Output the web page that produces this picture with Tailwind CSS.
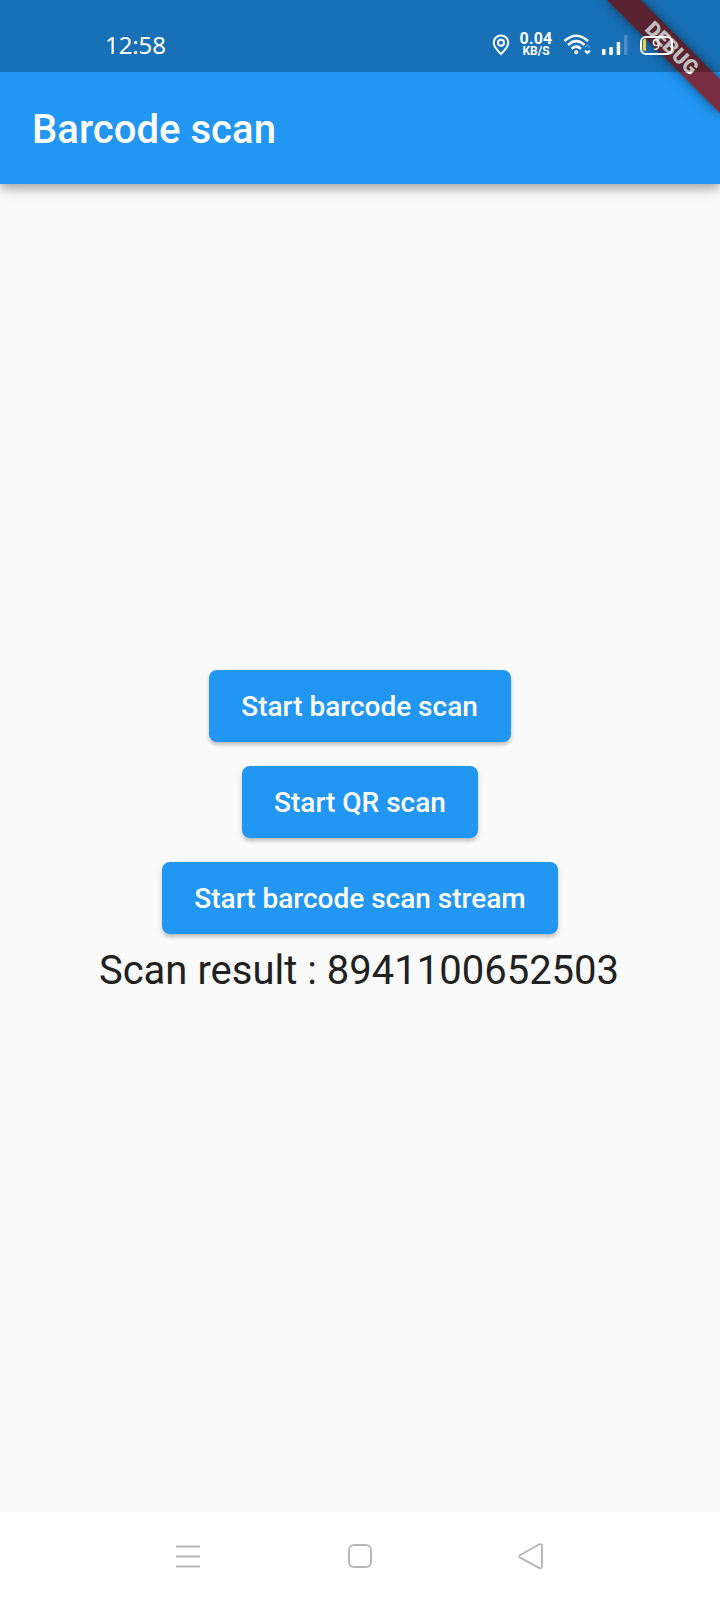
<!DOCTYPE html>
<html lang="en">
<head>
<meta charset="utf-8">
<title>Barcode scan</title>
<script src="https://cdn.jsdelivr.net/npm/@tailwindcss/browser@4"></script>
</head>
<body class="bg-[#fafafa] font-['Roboto',sans-serif]">
<div class="relative flex h-[1600px] w-[720px] flex-col overflow-hidden bg-[#fafafa]">
  <header class="flex h-[184px] shrink-0 flex-col bg-[#2196f3] shadow-[0_4px_8px_-1px_rgba(0,0,0,0.18),0_8px_10px_rgba(0,0,0,0.12),0_2px_16px_rgba(0,0,0,0.08)]">
    <div class="relative z-20 flex h-[72px] items-center bg-black/25 pl-[105px] text-white">
      <span class="mt-[18px] w-[387px] font-['Noto_Sans',sans-serif] text-[24px] leading-none tracking-[-0.1px]">12:58</span>
      <svg class="mt-[18px] h-[22px] w-[18px] shrink-0" viewBox="0 0 18 22" fill="none" stroke="#fff" stroke-width="2"><path d="M9 20 C6 17 1.7 13 1.7 8.7 A7.3 7.3 0 0 1 16.3 8.7 C16.3 13 12 17 9 20Z"/><circle cx="9" cy="8.7" r="3"/></svg>
      <div class="mt-[18px] ml-[9px] flex w-[34px] flex-col items-center font-bold">
        <span class="text-[16px] leading-[12px] tracking-[0.2px]">0.04</span>
        <span class="text-[12px] leading-[13px]">KB/S</span>
      </div>
      <svg class="mt-[18px] ml-[10px] h-[22px] w-[30px] shrink-0" viewBox="0 0 30 22" fill="none" stroke="#fff" stroke-width="2.6"><path d="M1.5 7 Q13.2 -3.5 25 7M5 11 Q13.2 3.3 21.5 11M8.6 14.7 Q13.2 10.7 18 14.7"/><circle cx="13.2" cy="18.3" r="2" fill="#fff" stroke="none"/><path d="M22 13.5l2.5-2.5 2.5 2.5" stroke="#4b9ade" stroke-width="1.6"/><path d="M22 16.5l2.5 2.5 2.5-2.5" stroke-width="2"/></svg>
      <svg class="mt-[18px] ml-[8px] h-[22px] w-[28px] shrink-0" viewBox="0 0 28 22" fill="#fff"><rect x="1" y="15" width="3.5" height="6" rx=".7"/><rect x="8.3" y="13" width="3.5" height="8" rx=".7"/><rect x="15.7" y="8" width="3.5" height="13" rx=".7"/><rect x="23" y="1" width="3.5" height="20" rx=".7" fill-opacity=".22"/></svg>
      <div class="mt-[18px] ml-[11px] flex h-[19px] w-[33px] items-center rounded-[6px] border-2 border-white">
        <span class="ml-px h-[12px] w-[3px] rounded-l-[2px] bg-[#f2cf3b]"></span>
        <span class="ml-[6px] text-[15px] leading-none">9</span>
      </div>
    </div>
    <div class="flex h-[112px] items-center pl-8">
      <h1 class="mt-[4px] text-[40px] leading-none font-medium tracking-[0.05px] text-white">Barcode scan</h1>
    </div>
  </header>
  <div class="absolute top-0 left-[720px] z-10 origin-top-left rotate-45">
    <div class="absolute top-[56px] left-[-80px] flex h-6 w-40 items-center justify-center bg-[#8d1616]/81 text-[20.4px] leading-none font-black text-white shadow-[0_0_12px_rgba(0,0,0,0.5)]">DEBUG</div>
  </div>
  <main class="flex flex-1 flex-col items-center gap-6 pt-[486px]">
    <button class="flex h-[72px] w-[302px] items-center justify-center rounded-lg bg-[#2196f3] pt-[2px] pr-px text-[28px] leading-none font-medium text-white shadow-[0_4px_4px_-2px_rgba(0,0,0,0.14),0_3px_4px_rgba(0,0,0,0.13),0_1px_6px_rgba(0,0,0,0.06)]">Start barcode scan</button>
    <button class="flex h-[72px] w-[236px] items-center justify-center rounded-lg bg-[#2196f3] pt-[2px] text-[28px] leading-none font-medium text-white shadow-[0_4px_4px_-2px_rgba(0,0,0,0.14),0_3px_4px_rgba(0,0,0,0.13),0_1px_6px_rgba(0,0,0,0.06)]">Start QR scan</button>
    <button class="flex h-[72px] w-[396px] items-center justify-center rounded-lg bg-[#2196f3] pt-[2px] text-[28px] leading-none font-medium text-white shadow-[0_4px_4px_-2px_rgba(0,0,0,0.14),0_3px_4px_rgba(0,0,0,0.13),0_1px_6px_rgba(0,0,0,0.06)]">Start barcode scan stream</button>
    <p class="-mt-[11px] pr-[2px] text-[40px] leading-[47px] whitespace-nowrap text-[#212121]">Scan result : 8941100652503</p>
  </main>
  <nav class="flex h-[88px] shrink-0 items-center bg-white pl-[174px] text-[#b8b8b8]">
    <svg class="h-7 w-7" viewBox="0 0 28 28" fill="none" stroke="currentColor" stroke-width="2"><path d="M2 4.5h24M2 14.5h24M2 24.5h24"/></svg>
    <svg class="ml-[144px] h-7 w-7" viewBox="0 0 28 28" fill="none" stroke="currentColor" stroke-width="2"><rect x="3" y="3" width="22" height="22" rx="5"/></svg>
    <svg class="ml-[142px] h-7 w-7" viewBox="0 0 28 28" fill="none" stroke="currentColor" stroke-width="2" stroke-linejoin="round"><path d="M4.2 13 L22.8 2.6 Q26 1.2 26 4 V24.2 Q26 27 23 25.8 L4.2 15.6 Q2.4 14.3 4.2 13Z"/></svg>
  </nav>
</div>
</body>
</html>
